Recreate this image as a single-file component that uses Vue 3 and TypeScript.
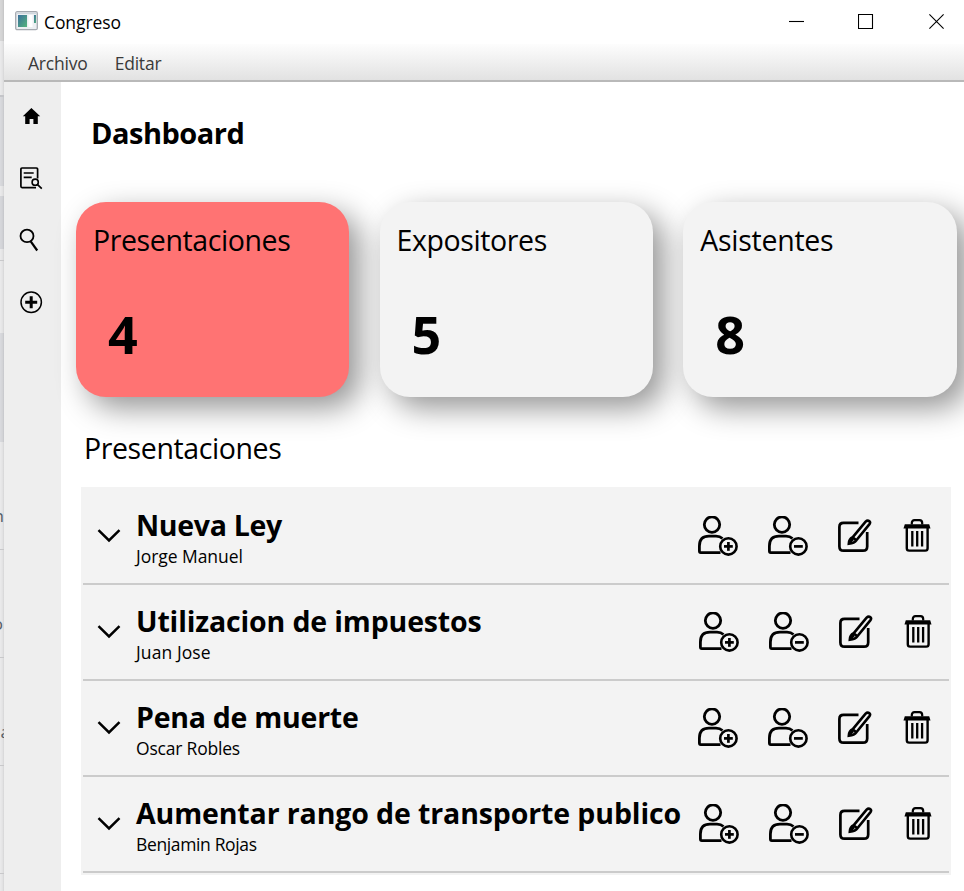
<script setup lang="ts">
interface Card { label: string; total: number; active: boolean }
interface Talk { title: string; speaker: string; fit: string }

const menus: string[] = ['Archivo', 'Editar']
const cards: Card[] = [
  { label: 'Presentaciones', total: 4, active: true },
  { label: 'Expositores', total: 5, active: false },
  { label: 'Asistentes', total: 8, active: false },
]
const talks: Talk[] = [
  { title: 'Nueva Ley', speaker: 'Jorge Manuel', fit: 'a' },
  { title: 'Utilizacion de impuestos', speaker: 'Juan Jose', fit: 'b' },
  { title: 'Pena de muerte', speaker: 'Oscar Robles', fit: 'c' },
  { title: 'Aumentar rango de transporte publico', speaker: 'Benjamin Rojas', fit: 'd' },
]
</script>

<template>
  <div class="desktop">
    <div class="behind">
      <i class="b1"></i><i class="b2"></i><i class="b3"></i><i class="b4"></i><i class="b5"></i><i class="b6"></i><i class="b7"></i><i class="b8"></i>
      <i class="cell"><span>n</span></i>
      <i class="cell"><span class="o">o</span></i>
      <i class="cell"><span class="a">a</span></i>
      <i class="cell"></i>
    </div>
    <div class="window">
      <header class="titlebar">
        <svg class="appicon" width="23" height="20" viewBox="0 0 23 20">
          <defs>
            <linearGradient id="pane" x1="0" y1="0" x2="1" y2="1"><stop offset="0" stop-color="#3a6f9c" /><stop offset="1" stop-color="#55b47c" /></linearGradient>
          </defs>
          <rect x=".7" y=".7" width="21.6" height="18" rx="1.5" fill="#eceff2" stroke="#a5a9b0" stroke-width="1.3" />
          <path d="M1.5 2.2h20" stroke="#cfd5dc" stroke-width="1.5" />
          <rect x="3" y="4" width="9" height="12" fill="url(#pane)" />
          <rect x="13.5" y="4" width="4" height="12" fill="#fff" />
          <rect x="19" y="4" width="2" height="8" fill="url(#pane)" />
        </svg>
        <span class="apptitle">Congreso</span>
        <div class="controls">
          <svg class="min" width="16" height="16" viewBox="0 0 16 16"><path d="M0 7.5h15" /></svg>
          <svg width="16" height="16" viewBox="0 0 16 16"><path d="M.5 .5h14v14h-14z" /></svg>
          <svg width="16" height="16" viewBox="0 0 16 16"><path d="M.4 .4l14.2 14.2M14.6 .4L.4 14.6" /></svg>
        </div>
      </header>
      <nav class="menubar"><span v-for="m in menus" :key="m">{{ m }}</span></nav>
      <div class="body">
        <aside class="sidebar">
          <svg width="24" height="24" viewBox="0 0 24 24"><path d="M12.4 4L21.2 12.2H18.8V20H14.4V15H10.6V20H6.2V12.2H3.8z" fill="#000" /></svg>
          <svg width="24" height="24" viewBox="0 0 24 24" fill="none" stroke="#000">
            <path d="M18.6 12.5V3.3Q18.6 2 17.4 2H3Q1.9 2 1.9 3.3V20.3Q1.9 21.6 3 21.6H17" stroke-width="1.7" />
            <path d="M4.7 7h10M4.7 11.3h8M18 18.2l4.8 4.4" stroke-width="1.7" /><circle cx="16.2" cy="16.2" r="3.1" stroke-width="1.6" />
          </svg>
          <svg width="24" height="24" viewBox="0 0 24 24" fill="none" stroke="#000"><ellipse cx="8" cy="7.9" rx="6.5" ry="6.2" stroke-width="1.8" /><path d="M11.7 13.3l6.5 9.2" stroke-width="2.2" /></svg>
          <svg width="24" height="24" viewBox="0 0 24 24" fill="none" stroke="#000"><circle cx="12.2" cy="12.2" r="10.2" stroke-width="1.5" /><path d="M6.2 12.2h12M12.2 6.2v12" stroke-width="3" /></svg>
        </aside>
        <main class="main">
          <h1>Dashboard</h1>
          <section class="cards">
            <article v-for="c in cards" :key="c.label" class="card" :class="{ active: c.active }">
              <span class="label" :class="c.label.toLowerCase()">{{ c.label }}</span>
              <strong>{{ c.total }}</strong>
            </article>
          </section>
          <h2 class="label presentaciones">Presentaciones</h2>
          <section class="list">
            <div v-for="t in talks" :key="t.title" class="row">
              <svg class="chev" width="24" height="16" viewBox="0 0 24 16"><path d="M1.5 2.2L12 12.5L22.5 2.2" fill="none" stroke="#000" stroke-width="2.5" /></svg>
              <div class="text">
                <span class="title" :class="'t-' + t.fit">{{ t.title }}</span>
                <span class="speaker" :class="'s-' + t.fit">{{ t.speaker }}</span>
              </div>
              <div class="actions" :class="{ nudge: t.fit === 'b' || t.fit === 'd' }">
                <svg v-for="k in 2" :key="k" width="40" height="40" viewBox="0 0 40 40" fill="none" stroke="#000" stroke-width="2.8">
                  <circle cx="14" cy="8.6" r="7.7" />
                  <path d="M22.5 36.6H2.8Q1.4 36.6 1.4 35V30Q1.4 20.2 11 20.2H18Q22 20.2 24.5 22.5" />
                  <circle cx="30.4" cy="30.4" r="8.2" stroke-width="2.6" />
                  <path d="M26 30.4h8.8" stroke-width="2.7" /><path v-if="k === 1" d="M30.4 26v8.8" stroke-width="2.7" />
                </svg>
                <svg class="edit" width="34" height="34" viewBox="0 0 34 34" fill="none" stroke="#000" stroke-width="2.7">
                  <path d="M20.5 3.9H5.5Q1.4 3.9 1.4 8V27.5Q1.4 31.7 5.5 31.7H25Q29.2 31.7 29.2 27.5V13" />
                  <path d="M14.6 18.3L27.6 2.6Q29.5 .8 31.2 2.1Q32.8 3.4 31.5 5.1L18.4 21.2Q16.5 24 10.8 24.7Q11 20 14.6 18.3L18.4 21.2" stroke-width="2.6" />
                  <path d="M11.2 23.8L15 19.8" stroke-width="3" />
                </svg>
                <svg width="28" height="34" viewBox="0 0 28 34" fill="none" stroke="#000">
                  <path d="M8.8 5.6V4Q8.8 1.2 11.5 1.2H16.5Q19.2 1.2 19.2 4V5.6" stroke-width="2.2" />
                  <path d="M1.8 5.3H26.2L27.5 9.5H.5z" fill="#000" stroke="none" />
                  <path d="M3.8 8.5V29.2Q3.8 31.6 6.2 31.6H22.2Q24.6 31.6 24.6 29.2V8.5" stroke-width="2.4" />
                  <path d="M9.3 12V27.5M14.2 12V27.5M19.1 12V27.5" stroke-width="2.3" />
                </svg>
              </div>
            </div>
          </section>
        </main>
      </div>
    </div>
  </div>
</template>

<style>
body { margin: 0; overflow: hidden; background: #fff; }
</style>

<style scoped>
.desktop { display: flex; width: 964px; height: 891px; overflow: hidden; font-family: "Open Sans", "Noto Sans", sans-serif; color: #000; }
.desktop * { box-sizing: border-box; }
.behind { width: 4px; flex: none; overflow: hidden; background: linear-gradient(90deg, #ebebec, #e3e3e4 60%, #d5d5d6); }
.behind i { display: block; font-style: normal; }
.b1 { height: 41px; background: rgba(0, 0, 0, .08); }
.b2 { height: 54px; }
.b3 { height: 2px; background: #c4c5c9; }
.b4 { height: 89px; background: rgba(70, 80, 110, .1); }
.b5 { height: 10px; }
.b6 { height: 53px; background: rgba(70, 80, 110, .12); }
.b7 { height: 84px; border-top: 1px solid transparent; background: linear-gradient(#c8c8ca, #c8c8ca) 0 10px / 4px 1px no-repeat; }
.b8 { height: 109px; background: rgba(70, 80, 110, .1); }
.behind .cell { display: flex; align-items: center; justify-content: flex-end; width: 4px; height: 108px; padding-top: 40px; border-bottom: 1px solid #c8c8ca; color: #555d68; font-size: 17px; line-height: 20px; overflow: hidden; }
.behind .o { margin-right: 1px; }
.behind .a { margin-right: -6px; }
.window { width: 960px; flex: none; display: flex; flex-direction: column; }
.titlebar { height: 44px; display: flex; align-items: center; padding: 0 19px 0 11px; }
.appicon { margin-top: -3px; }
.apptitle { margin: 0 0 0 6px; font-size: 17.5px; letter-spacing: -.1px; }
.controls { margin-left: auto; display: flex; gap: 55px; }
.controls svg { fill: none; stroke: #000; stroke-width: 1.1; }
.controls .min { margin-right: -2px; }
.menubar { height: 38px; display: flex; gap: 27px; align-items: center; padding: 2px 0 0 24px; background: linear-gradient(#fdfdfd, #e2e2e2); border-bottom: 2px solid #b9b9b9; font-size: 17.5px; letter-spacing: -.2px; color: #3a3a3a; }
.body { display: flex; flex: 1; }
.sidebar { width: 57px; flex: none; background: #eee; display: flex; flex-direction: column; gap: 38px; padding: 22px 0 0 15px; }
.main { width: 903px; flex: none; display: flex; flex-direction: column; }
h1 { margin: 31px 0 0 30px; font-size: 29px; line-height: 40px; font-weight: 700; letter-spacing: -.5px; }
.cards { display: flex; gap: 30.2px; margin: 49px 0 0 15px; }
.card { width: 273.4px; height: 195px; flex: none; border-radius: 30px; background: #f3f3f3; box-shadow: 11px 11px 30px rgba(0, 0, 0, .42); padding: 18px 0 0 17px; display: flex; flex-direction: column; }
.card.active { background: #ff7373; }
.label { font-size: 28.5px; line-height: 40px; font-weight: 400; }
.card strong { margin: 39px 0 0 15px; font-size: 52px; line-height: 70px; font-weight: 700; }
h2.label { margin: 31px 0 0 23px; }
.presentaciones { letter-spacing: -.4px; }
.expositores { letter-spacing: -.4px; }
.asistentes { letter-spacing: -.25px; }
.list { width: 870px; height: 388px; margin: 19px 0 0 20px; padding: 2px 2px 0; background: #f3f3f3; }
.row { height: 96px; display: flex; align-items: center; border-bottom: 2px solid #cbcbcb; padding-left: 14px; }
.chev { flex: none; }
.text { margin-left: 15px; display: flex; flex-direction: column; white-space: nowrap; margin-top: 2px; }
.title { font-size: 28.5px; line-height: 38px; font-weight: 700; }
.t-a { letter-spacing: -.3px; }
.t-b { letter-spacing: -.15px; }
.t-c { letter-spacing: -.25px; }
.t-d { letter-spacing: -.12px; }
.speaker { font-size: 17.5px; line-height: 24px; }
.s-a { letter-spacing: -.05px; }
.s-b { letter-spacing: .1px; }
.s-c { letter-spacing: -.2px; }
.s-d { letter-spacing: -.36px; }
.actions { margin: -1px 18px 0 auto; display: flex; align-items: center; gap: 30px; flex: none; }
.actions .edit { margin-right: 1px; }
.actions.nudge { margin-right: 17px; }
</style>
